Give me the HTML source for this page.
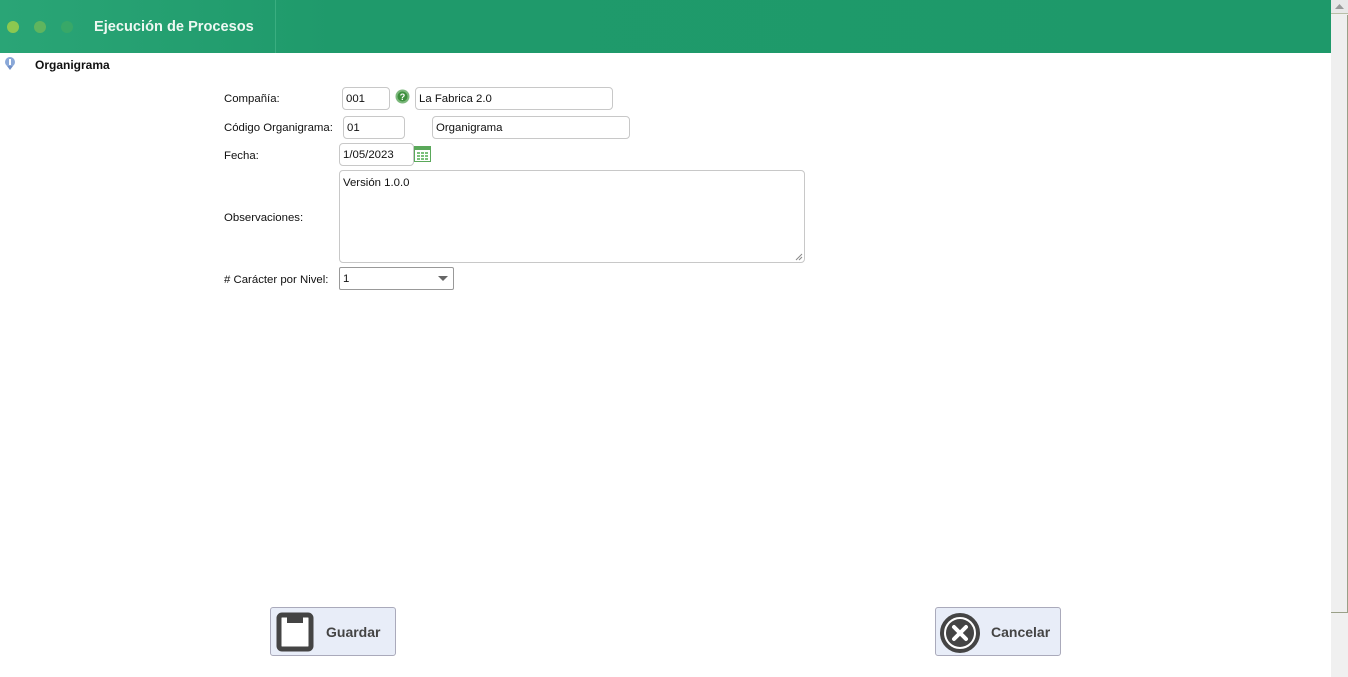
<!DOCTYPE html>
<html><head><meta charset="utf-8"><style>
*{box-sizing:border-box;margin:0;padding:0}
body{width:1348px;height:677px;overflow:hidden;background:#fff;font-family:"Liberation Sans",sans-serif;font-size:11.4px;color:#111;position:relative}
.hdr{position:absolute;left:0;top:0;width:1331px;height:53px;background:linear-gradient(90deg,#2aa576 0%,#1f9a6b 25%,#1e996a 100%)}
.sep{position:absolute;left:275px;top:0;width:1px;height:53px;background:#3aae80}
.dot{position:absolute;top:21px;width:12px;height:12px;border-radius:50%}
.title{position:absolute;left:94px;top:19px;color:#eef8f2;font-weight:bold;font-size:14.6px}
.sb{position:absolute;left:1331px;top:0;width:17px;height:677px;background:#f0f0f0}
.up{position:absolute;left:0;top:0;width:17px;height:14px;background:#e8e8e8;border-bottom:1px solid #b8bfa8}
.thumb{position:absolute;left:0;top:15px;width:17px;height:598px;background:#efefef;border-right:1px solid #9aa088;border-bottom:1px solid #9aa088}
.lbl{position:absolute;left:224px;margin-top:1px}
.inp{position:absolute;border:1px solid #c8c8c8;border-radius:4px;height:23px;padding:5px 3px 0;background:#fff;font-size:11.4px;white-space:nowrap}
.btn{position:absolute;top:607px;width:126px;height:49px;background:#e8edf8;border:1px solid #aab;border-radius:3px;font-weight:bold;font-size:14px;color:#444}
.btn span{position:absolute;top:16px}
</style></head><body>
<div class="hdr">
<div class="dot" style="left:7px;background:#8cc850"></div>
<div class="dot" style="left:34px;background:#5fb55e"></div>
<div class="dot" style="left:61px;background:#38a868"></div>
<div class="title">Ejecución de Procesos</div>
<div class="sep"></div>
</div>
<div class="sb"><div class="up"><svg width="17" height="14"><path d="M4 9 L8.5 4 L13 9Z" fill="#999"/></svg></div><div class="thumb"></div></div>
<svg style="position:absolute;left:4px;top:57px" width="12" height="13"><circle cx="6" cy="5" r="5" fill="#8aa8d8"/><rect x="5" y="2" width="2" height="6" fill="#fff"/><path d="M3 9 L6 13 L9 9Z" fill="#7090c8"/></svg>
<div style="position:absolute;left:35px;top:58px;font-weight:bold;font-size:12px">Organigrama</div>
<div class="lbl" style="top:92px">Compañía:</div>
<div class="inp" style="left:342px;top:87px;width:48px">001</div>
<svg style="position:absolute;left:395px;top:89px" width="15" height="15"><circle cx="7.5" cy="7.5" r="7" fill="#7cb87c"/><circle cx="7.5" cy="7.5" r="5" fill="#3d8f3d"/><text x="7.5" y="11" font-size="9" font-weight="bold" fill="#fff" text-anchor="middle" font-family="Liberation Sans">?</text></svg>
<div class="inp" style="left:415px;top:87px;width:198px">La Fabrica 2.0</div>
<div class="lbl" style="top:121px">Código Organigrama:</div>
<div class="inp" style="left:343px;top:116px;width:62px">01</div>
<div class="inp" style="left:432px;top:116px;width:198px">Organigrama</div>
<div class="lbl" style="top:149px">Fecha:</div>
<div class="inp" style="left:339px;top:143px;width:75px">1/05/2023</div>
<svg style="position:absolute;left:414px;top:146px" width="17" height="16"><rect x="0.5" y="0.5" width="16" height="15" fill="#fff" stroke="#5aa85a"/><rect x="1" y="1" width="15" height="3" fill="#5aa85a"/><g fill="#7cc07c"><rect x="3" y="6" width="3" height="2"/><rect x="7" y="6" width="3" height="2"/><rect x="11" y="6" width="3" height="2"/><rect x="3" y="9" width="3" height="2"/><rect x="7" y="9" width="3" height="2"/><rect x="11" y="9" width="3" height="2"/><rect x="3" y="12" width="3" height="2"/><rect x="7" y="12" width="3" height="2"/><rect x="11" y="12" width="3" height="2"/></g></svg>
<div class="lbl" style="top:211px">Observaciones:</div>
<div class="inp" style="left:339px;top:170px;width:466px;height:93px;padding:6px 3px">Versión 1.0.0</div>
<svg style="position:absolute;left:795px;top:253px" width="8" height="8"><path d="M1 7 L7 1 M4 7 L7 4" stroke="#888"/></svg>
<div class="lbl" style="top:273px"># Carácter por Nivel:</div>
<div class="inp" style="left:339px;top:267px;width:115px;border-color:#999;border-radius:2px">1</div>
<svg style="position:absolute;left:438px;top:276px" width="10" height="6"><path d="M0 0 L10 0 L5 5Z" fill="#666"/></svg>
<div class="btn" style="left:270px"><svg style="position:absolute;left:5px;top:4px" width="38" height="40"><rect x="3" y="3" width="32" height="34" rx="3" fill="#fff" stroke="#444" stroke-width="5"/><rect x="11" y="3" width="16" height="8" fill="#444"/></svg><span style="left:55px">Guardar</span></div>
<div class="btn" style="left:935px"><svg style="position:absolute;left:3px;top:4px" width="42" height="42"><circle cx="21" cy="21" r="18" fill="#fff" stroke="#444" stroke-width="4"/><circle cx="21" cy="21" r="14" fill="#444"/><path d="M15 15 L27 27 M27 15 L15 27" stroke="#fff" stroke-width="4" stroke-linecap="round"/></svg><span style="left:55px">Cancelar</span></div>
</body></html>
